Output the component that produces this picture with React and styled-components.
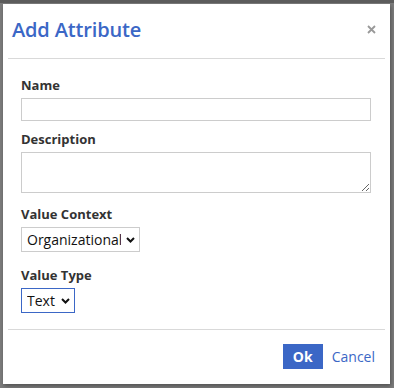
import React from "react";
import styled, { createGlobalStyle } from "styled-components";

const Global = createGlobalStyle`
  html, body { margin: 0; padding: 0; }
  body {
    width: 394px;
    height: 388px;
    overflow: hidden;
    background: #7c7c7c;
    border-top: 3px solid #5c5c5c;
    box-sizing: border-box;
    font-family: "Open Sans", "Liberation Sans", sans-serif;
  }
`;

const Dialog = styled.div`
  margin: 1px 4px 0 3px;
  width: 387px;
  height: 380px;
  background: #fff;
  box-shadow: 1px 2px 4px rgba(0, 0, 0, 0.35);
  display: flex;
  flex-direction: column;
  box-sizing: border-box;
`;

const Header = styled.div`
  height: 55px;
  margin: 0 5px;
  border-bottom: 1px solid #d9d9d9;
  display: flex;
  align-items: center;
  justify-content: space-between;
  padding: 0 6px 3px 4px;
  box-sizing: border-box;
`;

const Title = styled.h2`
  margin: 0;
  font-size: 20px;
  font-weight: 600;
  color: #3b67c6;
  letter-spacing: -0.15px;
`;

const Close = styled.button`
  border: none;
  background: none;
  padding: 0;
  width: 16px;
  height: 16px;
  display: flex;
  align-items: center;
  justify-content: center;
  cursor: pointer;
`;

const Body = styled.div`
  padding: 17px 19px 0 18px;
  flex: 1;
`;

const Field = styled.div`
  display: flex;
  flex-direction: column;
  align-items: flex-start;
  margin-bottom: ${(p) => p.$gap}px;
`;

const Label = styled.label`
  font-size: 13px;
  font-weight: 700;
  line-height: 18px;
  color: #333;
  margin-bottom: 4px;
`;

const Input = styled.input`
  width: 350px;
  height: 23px;
  box-sizing: border-box;
  border: 1px solid #ccc;
  margin: 0;
  padding: 2px 6px;
  font-family: inherit;
  font-size: 14px;
  outline: none;
`;

const TextArea = styled.textarea`
  display: block;
  width: 350px;
  height: 41px;
  box-sizing: border-box;
  border: 1px solid #ccc;
  margin: 0;
  padding: 2px 6px;
  font-family: inherit;
  font-size: 14px;
  resize: vertical;
  outline: none;
`;

const SelectWrap = styled.div`
  position: relative;
  display: inline-flex;
`;

const Select = styled.select`
  appearance: none;
  -webkit-appearance: none;
  height: 25px;
  width: ${(p) => p.$w}px;
  box-sizing: border-box;
  border: 1px solid ${(p) => (p.$focus ? "#3b67c6" : "#ccc")};
  border-radius: 0;
  margin: 0;
  padding: 0 18px 0 5px;
  font-family: "Open Sans", "Liberation Sans", sans-serif;
  font-size: 14px;
  color: #111;
  background: #fff;
  outline: none;
`;

const Chevron = styled.svg`
  position: absolute;
  right: 5px;
  top: 10px;
  pointer-events: none;
`;

const Footer = styled.div`
  margin: 0 5px;
  border-top: 1px solid #d9d9d9;
  display: flex;
  justify-content: flex-end;
  align-items: center;
  gap: 9px;
  padding: 14px 10px 15px 0;
`;

const OkButton = styled.button`
  width: 40px;
  height: 25px;
  border: none;
  background: #3b67c6;
  color: #fff;
  font-family: inherit;
  font-weight: 700;
  font-size: 14px;
  padding: 0;
  cursor: pointer;
`;

const LinkButton = styled.button`
  border: none;
  background: none;
  padding: 0;
  color: #3b67c6;
  font-family: inherit;
  font-size: 14px;
  font-weight: 400;
  cursor: pointer;
`;

function Dropdown({ width, focus, value, options }) {
  return (
    <SelectWrap>
      <Select $w={width} $focus={focus} defaultValue={value}>
        {options.map((o) => (
          <option key={o}>{o}</option>
        ))}
      </Select>
      <Chevron width="9" height="6" viewBox="0 0 9 6">
        <path d="M1 1L4.5 4.5L8 1" fill="none" stroke="#111" strokeWidth="2" />
      </Chevron>
    </SelectWrap>
  );
}

export default function App() {
  return (
    <>
      <Global />
      <Dialog>
        <Header>
          <Title>Add Attribute</Title>
          <Close aria-label="Close">
            <svg width="9" height="9" viewBox="0 0 9 9">
              <path d="M1 1L8 8M8 1L1 8" stroke="#999" strokeWidth="1.8" />
            </svg>
          </Close>
        </Header>
        <Body>
          <Field $gap={9}>
            <Label>Name</Label>
            <Input type="text" />
          </Field>
          <Field $gap={12}>
            <Label>Description</Label>
            <TextArea />
          </Field>
          <Field $gap={14}>
            <Label>Value Context</Label>
            <Dropdown width={119} value="Organizational" options={["Organizational", "Personal"]} />
          </Field>
          <Field $gap={0}>
            <Label>Value Type</Label>
            <Dropdown width={54} focus value="Text" options={["Text", "Number"]} />
          </Field>
        </Body>
        <Footer>
          <OkButton>Ok</OkButton>
          <LinkButton>Cancel</LinkButton>
        </Footer>
      </Dialog>
    </>
  );
}
